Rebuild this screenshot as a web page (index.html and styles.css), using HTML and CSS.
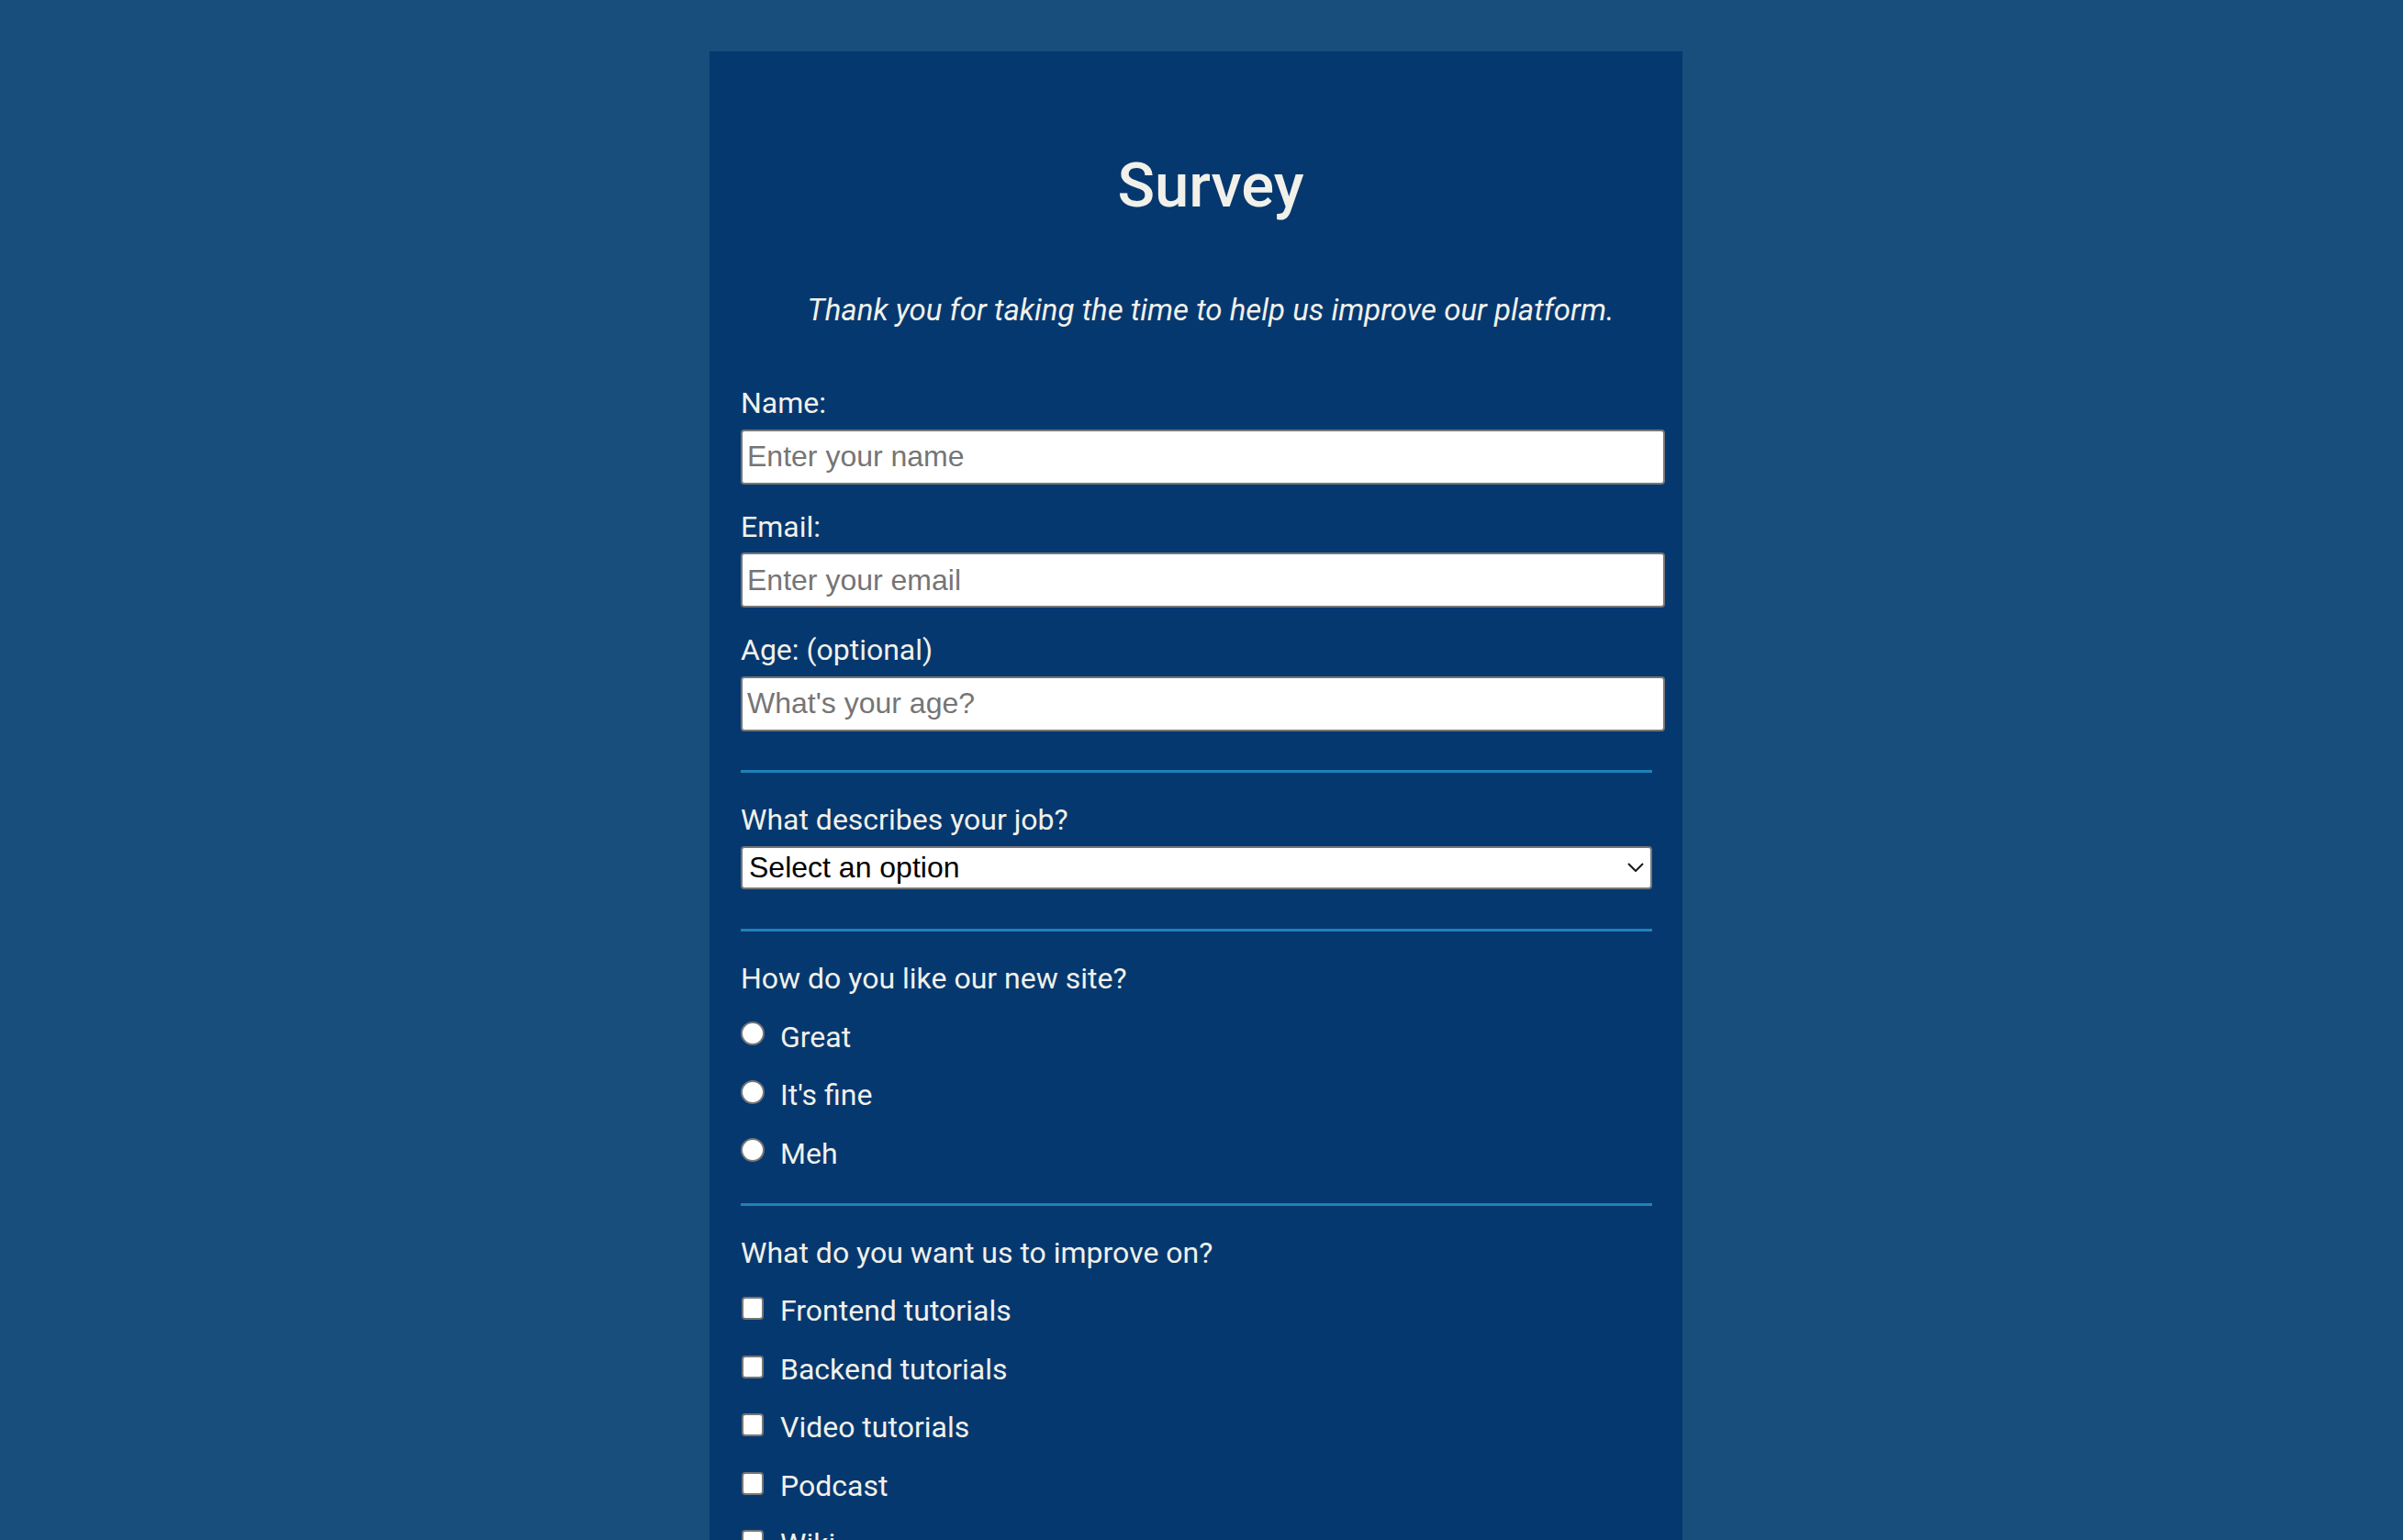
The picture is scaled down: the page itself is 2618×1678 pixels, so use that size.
FILE: index.html
```html
<!DOCTYPE html>
<html lang="en">
<head>
<meta charset="utf-8">
<title>Survey</title>
<link rel="stylesheet" href="styles.css">
</head>
<body>
<main class="survey">
  <header class="survey-header">
    <h1 class="title" id="title">Survey</h1>
    <p class="description" id="description">Thank you for taking the time to help us improve our platform.</p>
  </header>
  <form class="survey-form" id="survey-form">
    <div class="field">
      <label class="field-label" for="name" id="name-label">Name:</label>
      <input class="text-input" id="name" type="text" placeholder="Enter your name" required>
    </div>
    <div class="field">
      <label class="field-label" for="email" id="email-label">Email:</label>
      <input class="text-input" id="email" type="email" placeholder="Enter your email" required>
    </div>
    <div class="field">
      <label class="field-label" for="number" id="number-label">Age: (optional)</label>
      <input class="text-input" id="number" type="number" min="10" max="99" placeholder="What's your age?">
    </div>
    <hr class="divider">
    <div class="field">
      <label class="field-label" for="dropdown">What describes your job?</label>
      <div class="select-wrap">
        <select class="select" id="dropdown">
          <option>Select an option</option>
          <option>Student</option>
          <option>Full-time job</option>
          <option>Freelancer</option>
          <option>Other</option>
        </select>
        <svg class="select-chevron" width="18" height="10" viewBox="0 0 18 10" aria-hidden="true"><path d="M1 1 L9 9 L17 1" fill="none" stroke="#1a1a1a" stroke-width="2"/></svg>
      </div>
    </div>
    <hr class="divider divider--after-select">
    <div class="choice-group">
      <p class="field-label group-label">How do you like our new site?</p>
      <label class="choice"><input class="radio" type="radio" name="rating" value="great"><span>Great</span></label>
      <label class="choice"><input class="radio" type="radio" name="rating" value="fine"><span>It's fine</span></label>
      <label class="choice"><input class="radio" type="radio" name="rating" value="meh"><span>Meh</span></label>
    </div>
    <hr class="divider divider--after-choices">
    <div class="choice-group choice-group--checks">
      <p class="field-label group-label">What do you want us to improve on?</p>
      <label class="choice"><input class="checkbox" type="checkbox" value="frontend"><span>Frontend tutorials</span></label>
      <label class="choice"><input class="checkbox" type="checkbox" value="backend"><span>Backend tutorials</span></label>
      <label class="choice"><input class="checkbox" type="checkbox" value="video"><span>Video tutorials</span></label>
      <label class="choice"><input class="checkbox" type="checkbox" value="podcast"><span>Podcast</span></label>
      <label class="choice"><input class="checkbox" type="checkbox" value="wiki"><span>Wiki</span></label>
    </div>
    <hr class="divider divider--after-choices">
    <div class="field">
      <label class="field-label" for="comments">Any comments or suggestions?</label>
      <textarea class="textarea" id="comments" placeholder="Enter your comment here..."></textarea>
    </div>
    <button class="submit" id="submit" type="submit">Submit</button>
  </form>
</main>
</body>
</html>
```
FILE: styles.css
```css
html {
  background: #174e7c;
}

body {
  margin: 0;
  padding: 56px 0 60px;
  background: #174e7c;
  font-family: Roboto, "Noto Sans", Arial, sans-serif;
  color: #f1f1ea;
}

.survey {
  box-sizing: border-box;
  width: 1060px;
  margin-left: calc(50% - 536px);
  padding: 106px 33px 60px 34px;
  background: #063870;
}

.survey-header {
  padding-left: 31px;
  text-align: center;
}

.title {
  margin: 0;
  font-size: 67px;
  line-height: 80px;
  font-weight: 500;
}

.description {
  margin: 77.5px 0 0;
  font-size: 33px;
  line-height: 36px;
  font-style: italic;
}

.survey-form {
  margin-top: 65.5px;
}

.field {
  margin-bottom: 28px;
}

.field-label {
  display: block;
  margin: 0 0 10.5px;
  font-size: 32px;
  line-height: 36px;
}

.text-input {
  display: block;
  box-sizing: content-box;
  width: 100%;
  height: 56px;
  margin: 0;
  padding: 0 5px;
  border: 2px solid #767676;
  border-radius: 4px;
  background: #fff;
  font-family: "Liberation Sans", Arial, sans-serif;
  font-size: 32px;
  color: #111;
}

.text-input::placeholder,
.textarea::placeholder {
  color: #757575;
}

.select-wrap {
  position: relative;
  margin-top: 2.5px;
}

.select {
  display: block;
  box-sizing: border-box;
  width: 100%;
  height: 47px;
  margin: 0;
  padding: 0 40px 0 7px;
  border: 2px solid #767676;
  border-radius: 4px;
  background: #fff;
  -webkit-appearance: none;
  appearance: none;
  font-family: "Liberation Sans", Arial, sans-serif;
  font-size: 32px;
  color: #000;
}

.select-chevron {
  position: absolute;
  right: 9px;
  top: 18px;
  pointer-events: none;
}

.divider {
  height: 3px;
  margin: 42.5px 0 33px;
  border: 0;
  background: #1f82b7;
}

.divider--after-select {
  margin-top: 43.5px;
}

.divider--after-choices {
  margin-top: 36px;
}

.choice-group {
  display: flex;
  flex-direction: column;
  gap: 27.5px;
}

.group-label {
  margin: 0 0 0;
}

.choice-group--checks .group-label {
  margin-bottom: 0;
}

.choice {
  display: block;
  font-size: 32px;
  line-height: 36px;
}

.radio,
.checkbox {
  display: inline-block;
  -webkit-appearance: none;
  appearance: none;
  box-sizing: border-box;
  background: #fff;
  border: 2px solid #767676;
  vertical-align: baseline;
}

.radio {
  width: 26px;
  height: 26px;
  margin: 0 17px 1.5px 0;
  border-radius: 50%;
}

.checkbox {
  width: 24px;
  height: 25px;
  margin: 0 18px 1px 1px;
  border-radius: 4px;
}

.textarea {
  display: block;
  box-sizing: content-box;
  width: 100%;
  height: 160px;
  padding: 4px 5px;
  border: 2px solid #767676;
  border-radius: 4px;
  font-family: "Liberation Sans", Arial, sans-serif;
  font-size: 32px;
}

.submit {
  display: block;
  width: 100%;
  height: 60px;
  border: 0;
  border-radius: 4px;
  background: #1f82b7;
  color: #f1f1ea;
  font-family: Roboto, Arial, sans-serif;
  font-size: 32px;
}
```
